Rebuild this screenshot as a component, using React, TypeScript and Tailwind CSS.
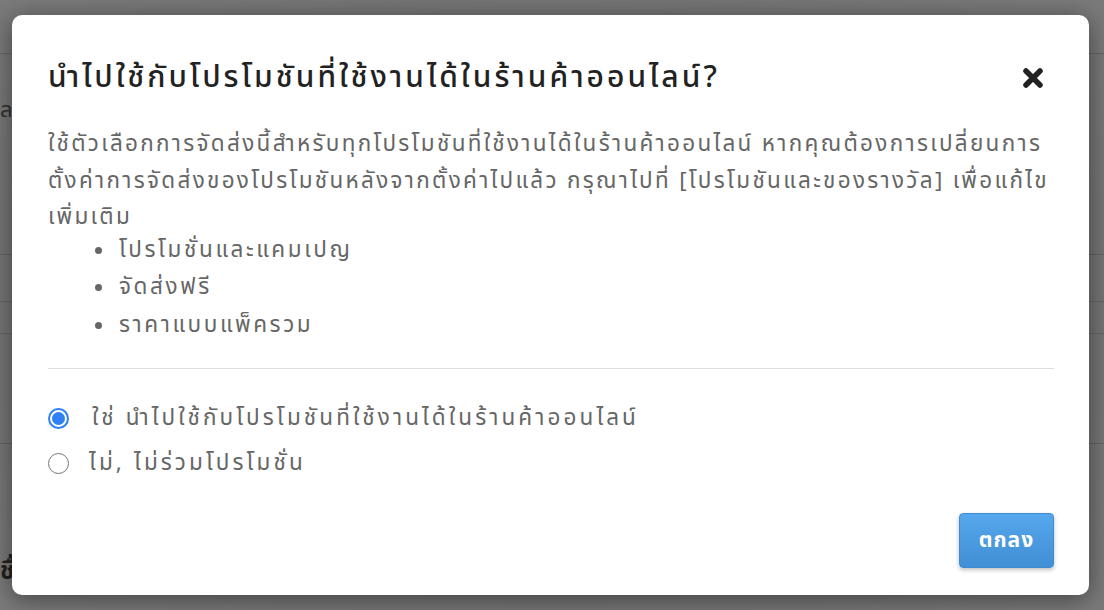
import React from "react";

export default function App() {
  const font = { fontFamily: '"Noto Sans Thai", "Noto Sans", "Liberation Sans", sans-serif' };
  return (
    <div className="relative w-[1104px] h-[610px] overflow-hidden bg-[#7a7a7a]" style={font}>
      {/* faint page behind */}
      <div className="absolute inset-0 flex flex-col">
        <div className="h-[54px] border-b border-[#666]" />
        <div className="h-[201px] border-b border-[#666] pl-0 pt-[40px] text-[22px] text-[#333]">ล</div>
        <div className="h-[47px] border-b border-[#6a6a6a]" />
        <div className="h-[32px] border-b border-[#6a6a6a]" />
        <div className="h-[110px] border-b border-[#666]" />
        <div className="pt-[110px] text-[24px] font-bold text-[#222]">ชื่</div>
      </div>
      <div className="absolute inset-0 bg-[radial-gradient(ellipse_at_center,rgba(0,0,0,0.15),rgba(0,0,0,0))]" />

      {/* modal */}
      <div className="absolute left-[12px] top-[15px] w-[1077px] h-[580px] bg-white rounded-[10px] shadow-[0_4px_24px_rgba(0,0,0,0.45)] pl-[36px] pr-[35px] flex flex-col">
        <div className="mt-[43px] flex items-center justify-between h-[40px]">
          <h1 className="text-[30px] leading-[40px] tracking-[3px] text-[#222] font-medium whitespace-nowrap">นำไปใช้กับโปรโมชันที่ใช้งานได้ในร้านค้าออนไลน์?</h1>
          <svg width="24" height="24" viewBox="0 0 24 24" className="mr-[9px]">
            <path d="M5 5 L19 19 M19 5 L5 19" stroke="#222" strokeWidth="5.5" strokeLinecap="round" />
          </svg>
        </div>
        <div className="mt-[28px] text-[22.5px] tracking-[2.3px] text-[#666] whitespace-nowrap">
          <div className="leading-[36.5px]">
            <div>ใช้ตัวเลือกการจัดส่งนี้สำหรับทุกโปรโมชันที่ใช้งานได้ในร้านค้าออนไลน์ หากคุณต้องการเปลี่ยนการ</div>
            <div>ตั้งค่าการจัดส่งของโปรโมชันหลังจากตั้งค่าไปแล้ว กรุณาไปที่ [โปรโมชันและของรางวัล] เพื่อแก้ไข</div>
            <div>เพิ่มเติม</div>
          </div>
          <ul className="pl-[47px] -mt-[4px] leading-[37.5px] tracking-[2.6px]">
            {["โปรโมชั่นและแคมเปญ", "จัดส่งฟรี", "ราคาแบบแพ็ครวม"].map((t) => (
              <li key={t} className="flex items-center gap-[17px]">
                <span className="w-[7px] h-[7px] rounded-full bg-[#666]" />
                <span>{t}</span>
              </li>
            ))}
          </ul>
        </div>
        <div className="mt-[24px] border-t border-[#ddd]" />
        <div className="mt-[27px] flex flex-col text-[22.5px] tracking-[3.1px] text-[#666] leading-[45px] whitespace-nowrap">
          <label className="flex items-center">
            <span className="w-[21px] h-[21px] rounded-full border-[2px] border-[#2f7ff5] flex items-center justify-center">
              <span className="w-[13px] h-[13px] rounded-full bg-[#2f7ff5]" />
            </span>
            <span className="ml-[23px]">ใช่ นำไปใช้กับโปรโมชันที่ใช้งานได้ในร้านค้าออนไลน์</span>
          </label>
          <label className="flex items-center">
            <span className="w-[21px] h-[21px] rounded-full border-[1.5px] border-[#767676] bg-white" />
            <span className="ml-[20px]">ไม่, ไม่ร่วมโปรโมชั่น</span>
          </label>
        </div>
        <div className="flex-1" />
        <div className="flex justify-end pb-[27px]">
          <button className="w-[95px] h-[55px] rounded-[4px] border border-[#3f8bd0] bg-[linear-gradient(#56a7ee,#418fd4)] text-white text-[21px] tracking-[1px] font-bold shadow-[0_2px_4px_rgba(0,0,0,0.25)]">
            ตกลง
          </button>
        </div>
      </div>
    </div>
  );
}
